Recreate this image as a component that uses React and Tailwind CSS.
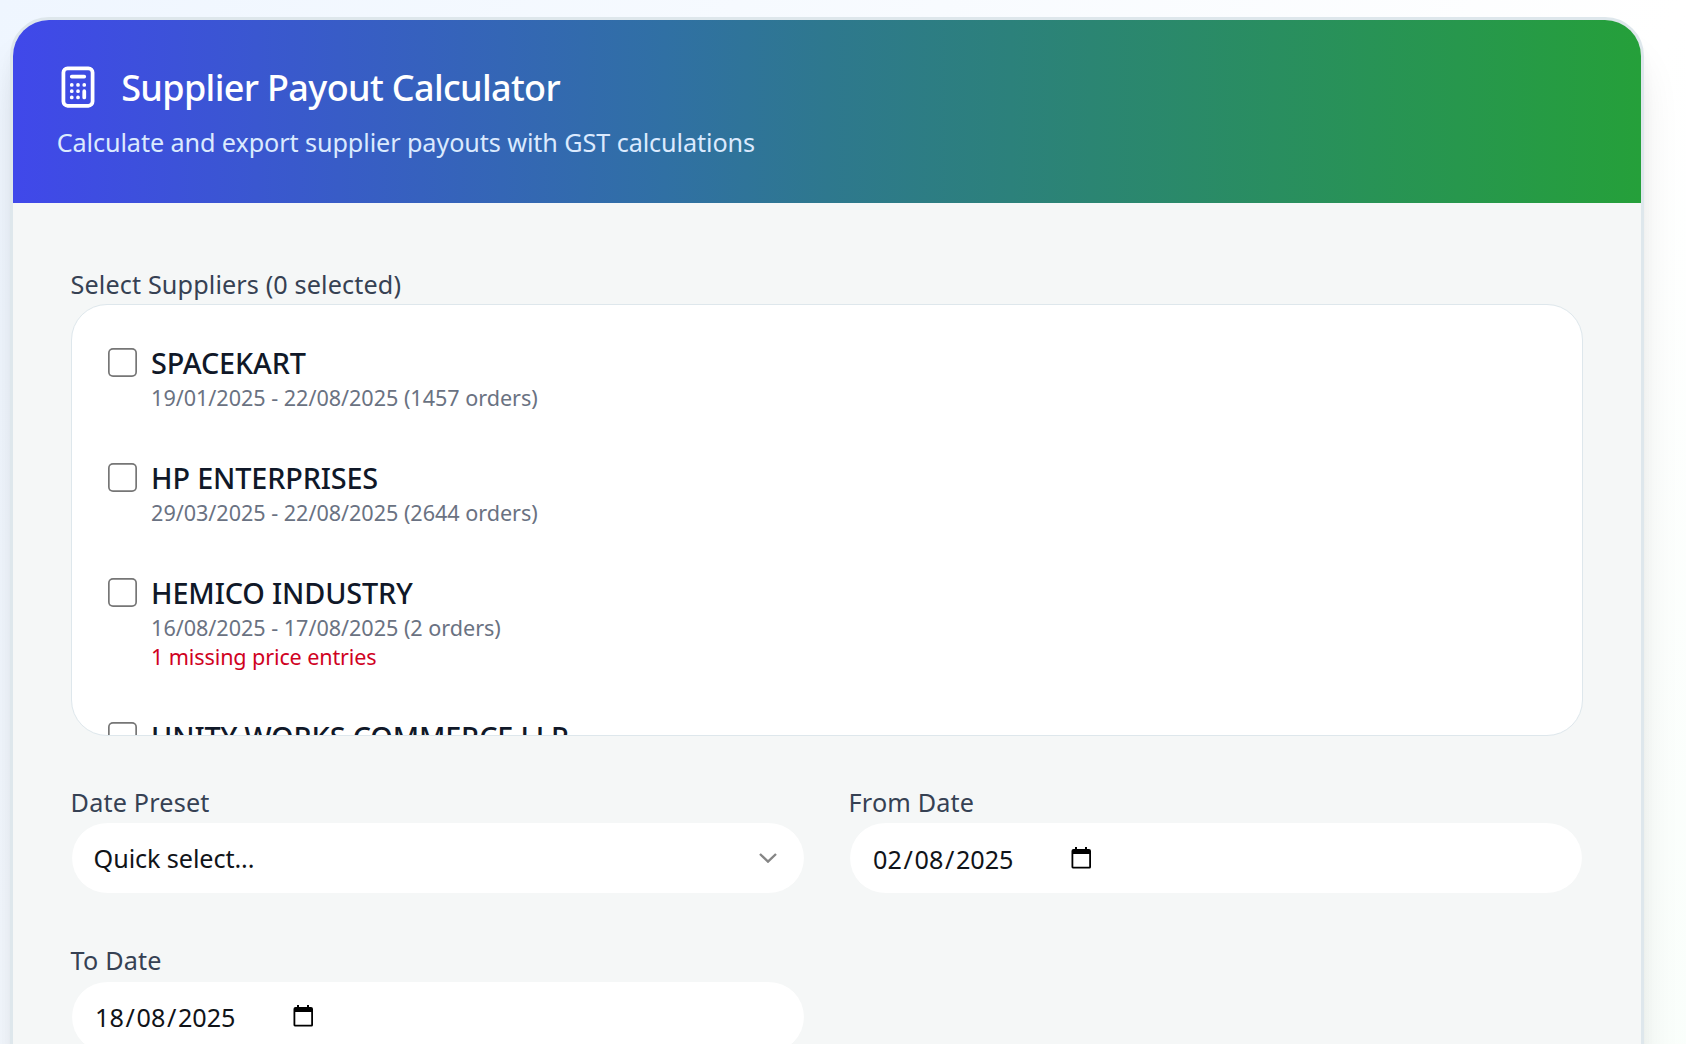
import React from "react";

const suppliers = [
  { name: "SPACEKART", info: "19/01/2025 - 22/08/2025 (1457 orders)" },
  { name: "HP ENTERPRISES", info: "29/03/2025 - 22/08/2025 (2644 orders)" },
  {
    name: "HEMICO INDUSTRY",
    info: "16/08/2025 - 17/08/2025 (2 orders)",
    warning: "1 missing price entries",
  },
  { name: "UNITY WORKS COMMERCE LLP" },
];

function CalculatorIcon() {
  return (
    <svg
      className="-mt-[2px] -ml-[3.5px] h-[50px] w-[50px] shrink-0"
      viewBox="0 0 24 24"
      fill="none"
      stroke="currentColor"
      strokeWidth="1.8"
      strokeLinecap="round"
      strokeLinejoin="round"
    >
      <path d="M9 7h6m0 10v-3m-3 3h.01M9 17h.01M9 14h.01M12 14h.01M15 11h.01M12 11h.01M9 11h.01M7 21h10a2 2 0 002-2V5a2 2 0 00-2-2H7a2 2 0 00-2 2v14a2 2 0 002 2z" />
    </svg>
  );
}

function CalendarIcon() {
  return (
    <svg className="-mt-[1px] h-[22px] w-[20px]" viewBox="0 0 20 22" fill="#000">
      <path
        fillRule="evenodd"
        d="M4 0h2v2h8V0h2v2h2a2 2 0 0 1 2 2v16a1.6 1.6 0 0 1-1.6 1.6H1.9A1.6 1.6 0 0 1 .5 20V4a2 2 0 0 1 2-2H4zM2.3 7v12.8h15.9V7z"
      />
    </svg>
  );
}

function Field({ label, children }) {
  return (
    <div className="flex flex-col">
      <span className="h-[43.2px] text-[25.2px] leading-[47.2px] tracking-[0.17px] text-[#364153]">{label}</span>
      <div className="flex h-[72px] items-center rounded-[36px] border border-[#f5f7f7] bg-white px-[22px] text-[25.2px] text-[#101318]">
        {children}
      </div>
    </div>
  );
}

function DateValue({ parts }) {
  return (
    <>
      <span className="flex w-[199.5px] gap-[1.6px] pt-[3px] pl-[1.5px]">
        <span>{parts[0]}</span>
        <span>/</span>
        <span>{parts[1]}</span>
        <span>/</span>
        <span>{parts[2]}</span>
      </span>
      <CalendarIcon />
    </>
  );
}

export default function App() {
  return (
    <div className="h-[1044px] w-[1686px] overflow-hidden bg-[linear-gradient(to_bottom_right,#eff6ff,#ffffff,#f0fdf4)] bg-[length:1686px_3000px] pt-[17px] pl-[10px] font-['Noto_Sans',sans-serif]">
      <div className="h-[1300px] w-[1634px] overflow-hidden rounded-[39px] border-[3px] border-[#dee7ec] bg-[#f5f7f7] shadow-[0_36px_45px_-9px_rgba(0,0,0,0.12),0_14px_18px_-5px_rgba(0,0,0,0.06)]">
        <div className="h-[183px] bg-[linear-gradient(90deg,#4048ea,#3070a4_40%,#2e788e_50%,#25a03a)] px-[43.2px] pt-[43.2px] text-white">
          <div className="flex h-[50.4px] items-center gap-[18.5px]">
            <CalculatorIcon />
            <h1 className="text-[36px] font-medium tracking-[-0.65px]">Supplier Payout Calculator</h1>
          </div>
          <p className="pl-[0.5px] text-[25.2px] leading-[56px] tracking-[-0.09px] text-[#dbeafe]">
            Calculate and export supplier payouts with GST calculations
          </p>
        </div>
        <div className="p-[57.6px]">
          <div className="h-[43.2px] text-[25.2px] leading-[47.2px] tracking-[0.12px] text-[#364153]">
            Select Suppliers (0 selected)
          </div>
          <div className="h-[432px] overflow-hidden rounded-[36px] border border-[#dee7ec] bg-white p-[14.9px]">
            {suppliers.map((s) => (
              <div key={s.name} className="flex gap-[14px] p-[21.6px]">
                <span className="mt-[7px] h-[29px] w-[29px] shrink-0 rounded-[5px] bg-white shadow-[inset_0_0_0_1.7px_#767676]" />
                <div>
                  <div className="text-[28.8px] leading-[43px] font-medium tracking-[-0.15px] text-[#101828]">{s.name}</div>
                  <div className="text-[21.6px] leading-[28.8px] tracking-[-0.03px] text-[#6a7282]">{s.info}</div>
                  {s.warning && (
                    <div className="text-[21.6px] leading-[28.8px] tracking-[-0.13px] text-[#d0021f]">{s.warning}</div>
                  )}
                </div>
              </div>
            ))}
          </div>
          <div className="mt-[43.2px] grid grid-cols-2 gap-[43.2px]">
            <Field label="Date Preset">
              <span className="grow pt-[2px] tracking-[-0.1px]">Quick select...</span>
              <svg className="mr-[5px] h-[10px] w-[18px]" viewBox="0 0 18 10" fill="none" stroke="#858585" strokeWidth="2.4">
                <path d="M1 1l8 7.6L17 1" />
              </svg>
            </Field>
            <Field label="From Date">
              <DateValue parts={["02", "08", "2025"]} />
            </Field>
            <Field label="To Date">
              <DateValue parts={["18", "08", "2025"]} />
            </Field>
          </div>
        </div>
      </div>
    </div>
  );
}
